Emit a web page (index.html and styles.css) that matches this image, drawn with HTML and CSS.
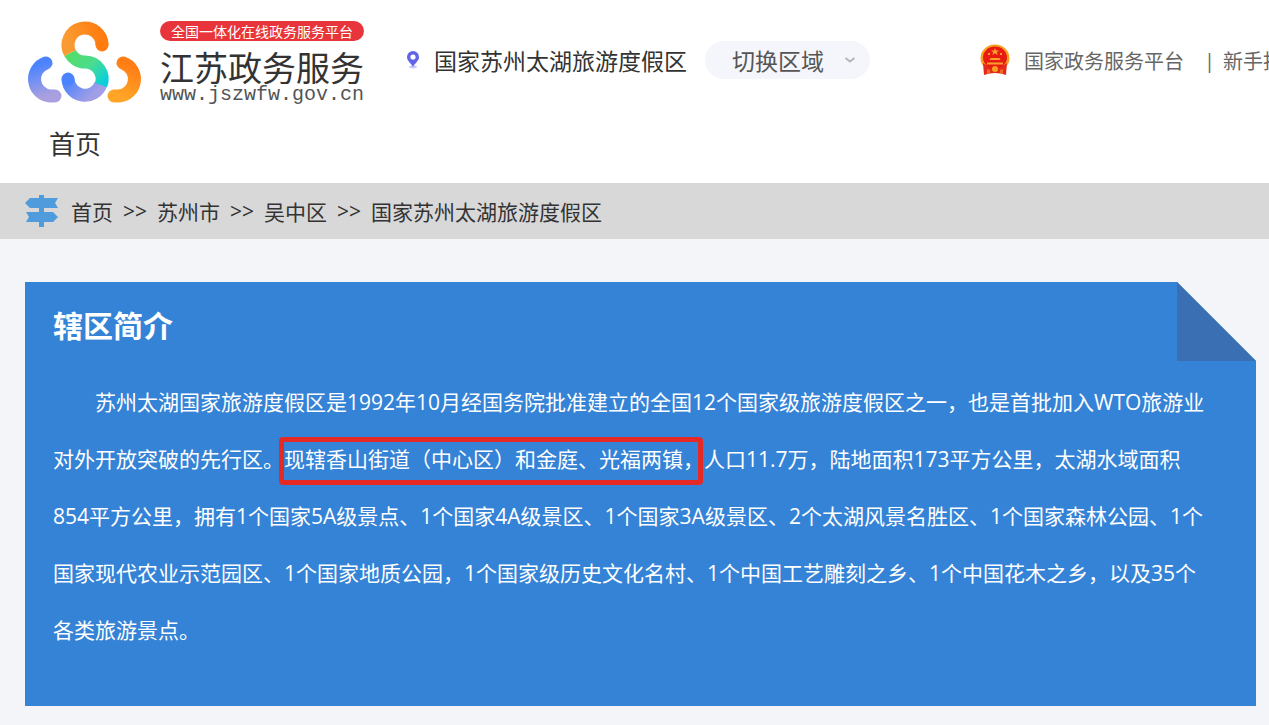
FILE: index.html
```
<!DOCTYPE html>
<html lang="zh-CN">
<head>
<meta charset="utf-8">
<title>江苏政务服务</title>
<link rel="stylesheet" href="styles.css">
</head>
<body>
<header class="header">
  <div class="topbar">
    <a class="brand" href="#">
      <svg class="brand-mark" viewBox="0 0 120 90" aria-hidden="true">
        <defs>
          <linearGradient id="orange" x1="0" y1="0.6" x2="1" y2="0.4"><stop offset="0" stop-color="#f99b32"/><stop offset="1" stop-color="#ff7d10"/></linearGradient>
          <linearGradient id="green" x1="0" y1="0" x2="1" y2="1"><stop offset="0" stop-color="#55dc66"/><stop offset="0.5" stop-color="#4bdc8e"/><stop offset="1" stop-color="#08cfdc"/></linearGradient>
          <linearGradient id="blue" x1="0" y1="0" x2="1" y2="0.5"><stop offset="0" stop-color="#4b83ff"/><stop offset="1" stop-color="#a29ee5"/></linearGradient>
          <linearGradient id="left" x1="0.4" y1="0" x2="0.6" y2="1"><stop offset="0" stop-color="#4b83ff"/><stop offset="1" stop-color="#aaa0df"/></linearGradient>
          <linearGradient id="right" x1="0.6" y1="0" x2="0.3" y2="1"><stop offset="0" stop-color="#ff7d14"/><stop offset="1" stop-color="#ffa527"/></linearGradient>
        </defs>
        <g fill="none" stroke-width="13">
          <path d="M21 45A17 17 0 0 0 25 78H30" stroke="url(#left)" stroke-linecap="round"/>
          <path d="M98 45A17 17 0 0 1 94 78H89" stroke="url(#right)" stroke-linecap="round"/>
          <path d="M43 61A17 17 0 0 0 76 66" stroke="url(#blue)"/>
          <circle cx="43" cy="61" r="6.500" fill="#4b83ff" stroke="none"/>
          <path d="M45 35A17 17 0 0 0 60 44A17 17 0 0 1 76 67" stroke="url(#green)"/>
          <path d="M77 27A17 17 0 1 0 45 35" stroke="url(#orange)"/>
          <circle cx="77" cy="27" r="6.500" fill="#ff7d10" stroke="none"/>
        </g>
      </svg>
      <span class="brand-text">
        <span class="brand-tag">全国一体化在线政务服务平台</span>
        <span class="brand-name">江苏政务服务</span>
        <span class="brand-url">www.jszwfw.gov.cn</span>
      </span>
    </a>
    <div class="region">
      <svg class="pin" viewBox="0 0 14 20" aria-hidden="true">
        <ellipse cx="7" cy="17" rx="4" ry="1.400" fill="#c9c9fa"/>
        <path d="M7 17C5 13 1 11 1 7a6 6 0 0 1 12 0c0 4-4 6-6 10z" fill="#6264e8"/>
        <circle cx="7" cy="7" r="2.600" fill="#fff"/>
      </svg>
      <span>国家苏州太湖旅游度假区</span>
    </div>
    <button class="switch" type="button">切换区域
      <svg class="chevron" viewBox="0 0 12 8" aria-hidden="true"><path d="M1.500 2L6 5.500L10.500 2" fill="none" stroke="#b4b5ba" stroke-width="2"/></svg>
    </button>
    <nav class="links">
      <svg class="emblem" viewBox="0 0 30 32" aria-hidden="true">
        <ellipse cx="15" cy="14" rx="14.500" ry="13.500" fill="#f6a21f"/>
        <path d="M3 19Q15 28 27 19L26 31Q15 27 4 31z" fill="#e32a1c"/>
        <ellipse cx="15" cy="13.500" rx="12" ry="11" fill="#e81a12"/>
        <path d="M15 4l1 2.500h3l-2.300 1.700 1 2.800-2.700-1.700-2.700 1.700 1-2.800L11 6.500h3z" fill="#f9a328"/>
        <path d="M8 9h2v2H8zM20 9h2v2h-2zM10.500 14h9l1 2h-11zM7 18.500h16v2H7z" fill="#f8a22c"/>
        <circle cx="15" cy="25" r="3" fill="#f6a21f"/>
        <path d="M7 25l3 1v3l-3 1zM23 25l-3 1v3l3 1z" fill="#f36a24"/>
      </svg>
      <a href="#">国家政务服务平台</a>
      <span class="bar">|</span>
      <a href="#">新手指南</a>
    </nav>
  </div>
  <nav class="mainnav"><a href="#">首页</a></nav>
</header>
<nav class="crumbs" aria-label="面包屑">
  <svg class="sign" viewBox="0 0 34 32" aria-hidden="true">
    <g fill="#4f9bdc"><path d="M14 0h5v32h-5z"/><path d="M5 3h28l-3 5 3 5H5L0 8z"/><path d="M1 17h27l5 5-5 5H1l3-5z"/></g>
  </svg>
  <a href="#">首页</a><span>&gt;&gt;</span><a href="#">苏州市</a><span>&gt;&gt;</span><a href="#">吴中区</a><span>&gt;&gt;</span><a href="#">国家苏州太湖旅游度假区</a>
</nav>
<main class="content">
  <section class="card">
    <h1>辖区简介</h1>
    <p>苏州太湖国家旅游度假区是1992年10月经国务院批准建立的全国12个国家级旅游度假区之一，也是首批加入WTO旅游业对外开放突破的先行区。<span class="marked">现辖香山街道（中心区）和金庭、光福两镇，</span>人口11.7万，陆地面积173平方公里，太湖水域面积854平方公里，拥有1个国家5A级景点、1个国家4A级景区、1个国家3A级景区、2个太湖风景名胜区、1个国家森林公园、1个国家现代农业示范园区、1个国家地质公园，1个国家级历史文化名村、1个中国工艺雕刻之乡、1个中国花木之乡，以及35个各类旅游景点。</p>
  </section>
</main>
</body>
</html>
```
FILE: styles.css
```
* {
  box-sizing: border-box;
}

body {
  margin: 0;
  background: #f4f5f8;
  color: #333;
  font-family: "Open Sans", "Noto Sans CJK SC", sans-serif;
  overflow-x: hidden;
}

a {
  color: inherit;
  text-decoration: none;
}

svg {
  flex: none;
}

.header {
  background: #fff;
  overflow: hidden;
}

.topbar {
  display: flex;
  align-items: center;
  height: 120px;
  padding-left: 25px;
  white-space: nowrap;
}

.brand {
  display: flex;
  align-items: center;
  gap: 15px;
  padding-top: 6px;
}

.brand-mark {
  width: 120px;
  height: 90px;
}

.brand-text {
  display: flex;
  flex-direction: column;
  width: 204px;
  font-family: "Noto Sans CJK SC", sans-serif;
}

.brand-tag {
  border-radius: 10px;
  background: #e8353b;
  color: #fff;
  font-size: 14px;
  line-height: 20px;
  text-align: center;
}

.brand-name {
  margin-top: 8px;
  font-size: 34px;
  font-weight: 400;
  line-height: 36px;
}

.brand-url {
  color: #555;
  font-family: "Liberation Mono", monospace;
  font-size: 20px;
  line-height: 20px;
}

.region {
  display: flex;
  align-items: center;
  gap: 14px;
  margin-left: 42px;
  font-size: 23px;
}

.pin {
  width: 14px;
  height: 20px;
}

.switch {
  display: flex;
  align-items: center;
  gap: 20px;
  height: 38px;
  margin-left: 18px;
  padding: 0 14px 0 27px;
  border: 0;
  border-radius: 19px;
  background: #f5f6fb;
  color: #555;
  font: inherit;
  font-size: 23px;
}

.chevron {
  width: 12px;
  height: 8px;
}

.links {
  display: flex;
  align-items: center;
  margin-left: auto;
  margin-right: -34px;
  color: #666;
  font-size: 20px;
}

.emblem {
  width: 30px;
  height: 32px;
  margin-right: 14px;
}

.bar {
  margin: 0 8px 0 20px;
}

.mainnav {
  padding: 4px 49px 19px;
  font-size: 26px;
  line-height: 40px;
}

.crumbs {
  display: flex;
  align-items: center;
  gap: 8px;
  height: 56px;
  padding: 0 25px;
  background: #d8d8d8;
  font-size: 21px;
}

.crumbs span {
  width: 28px;
  text-align: center;
}

.sign {
  width: 34px;
  height: 32px;
  margin-right: 4px;
}

.content {
  padding: 43px 13px 19px 25px;
}

.card {
  position: relative;
  padding: 22px 46px 47px 28px;
  background: #3583d6;
  color: #fff;
  clip-path: polygon(0 0, calc(100% - 79px) 0, 100% 79px, 100% 100%, 0 100%);
}

.card::after {
  content: "";
  position: absolute;
  top: 0;
  right: 0;
  width: 79px;
  height: 79px;
  background: #3b6fb3;
}

.card h1 {
  margin: 0 0 26px;
  font-size: 30px;
  line-height: 44px;
}

.card p {
  margin: 0;
  font-size: 21px;
  line-height: 57px;
  text-indent: 2em;
}

.marked {
  position: relative;
}

.marked::after {
  content: "";
  position: absolute;
  inset: -8px 1px -12px -5px;
  border: 5px solid #e52a26;
  border-radius: 4px;
}
```
